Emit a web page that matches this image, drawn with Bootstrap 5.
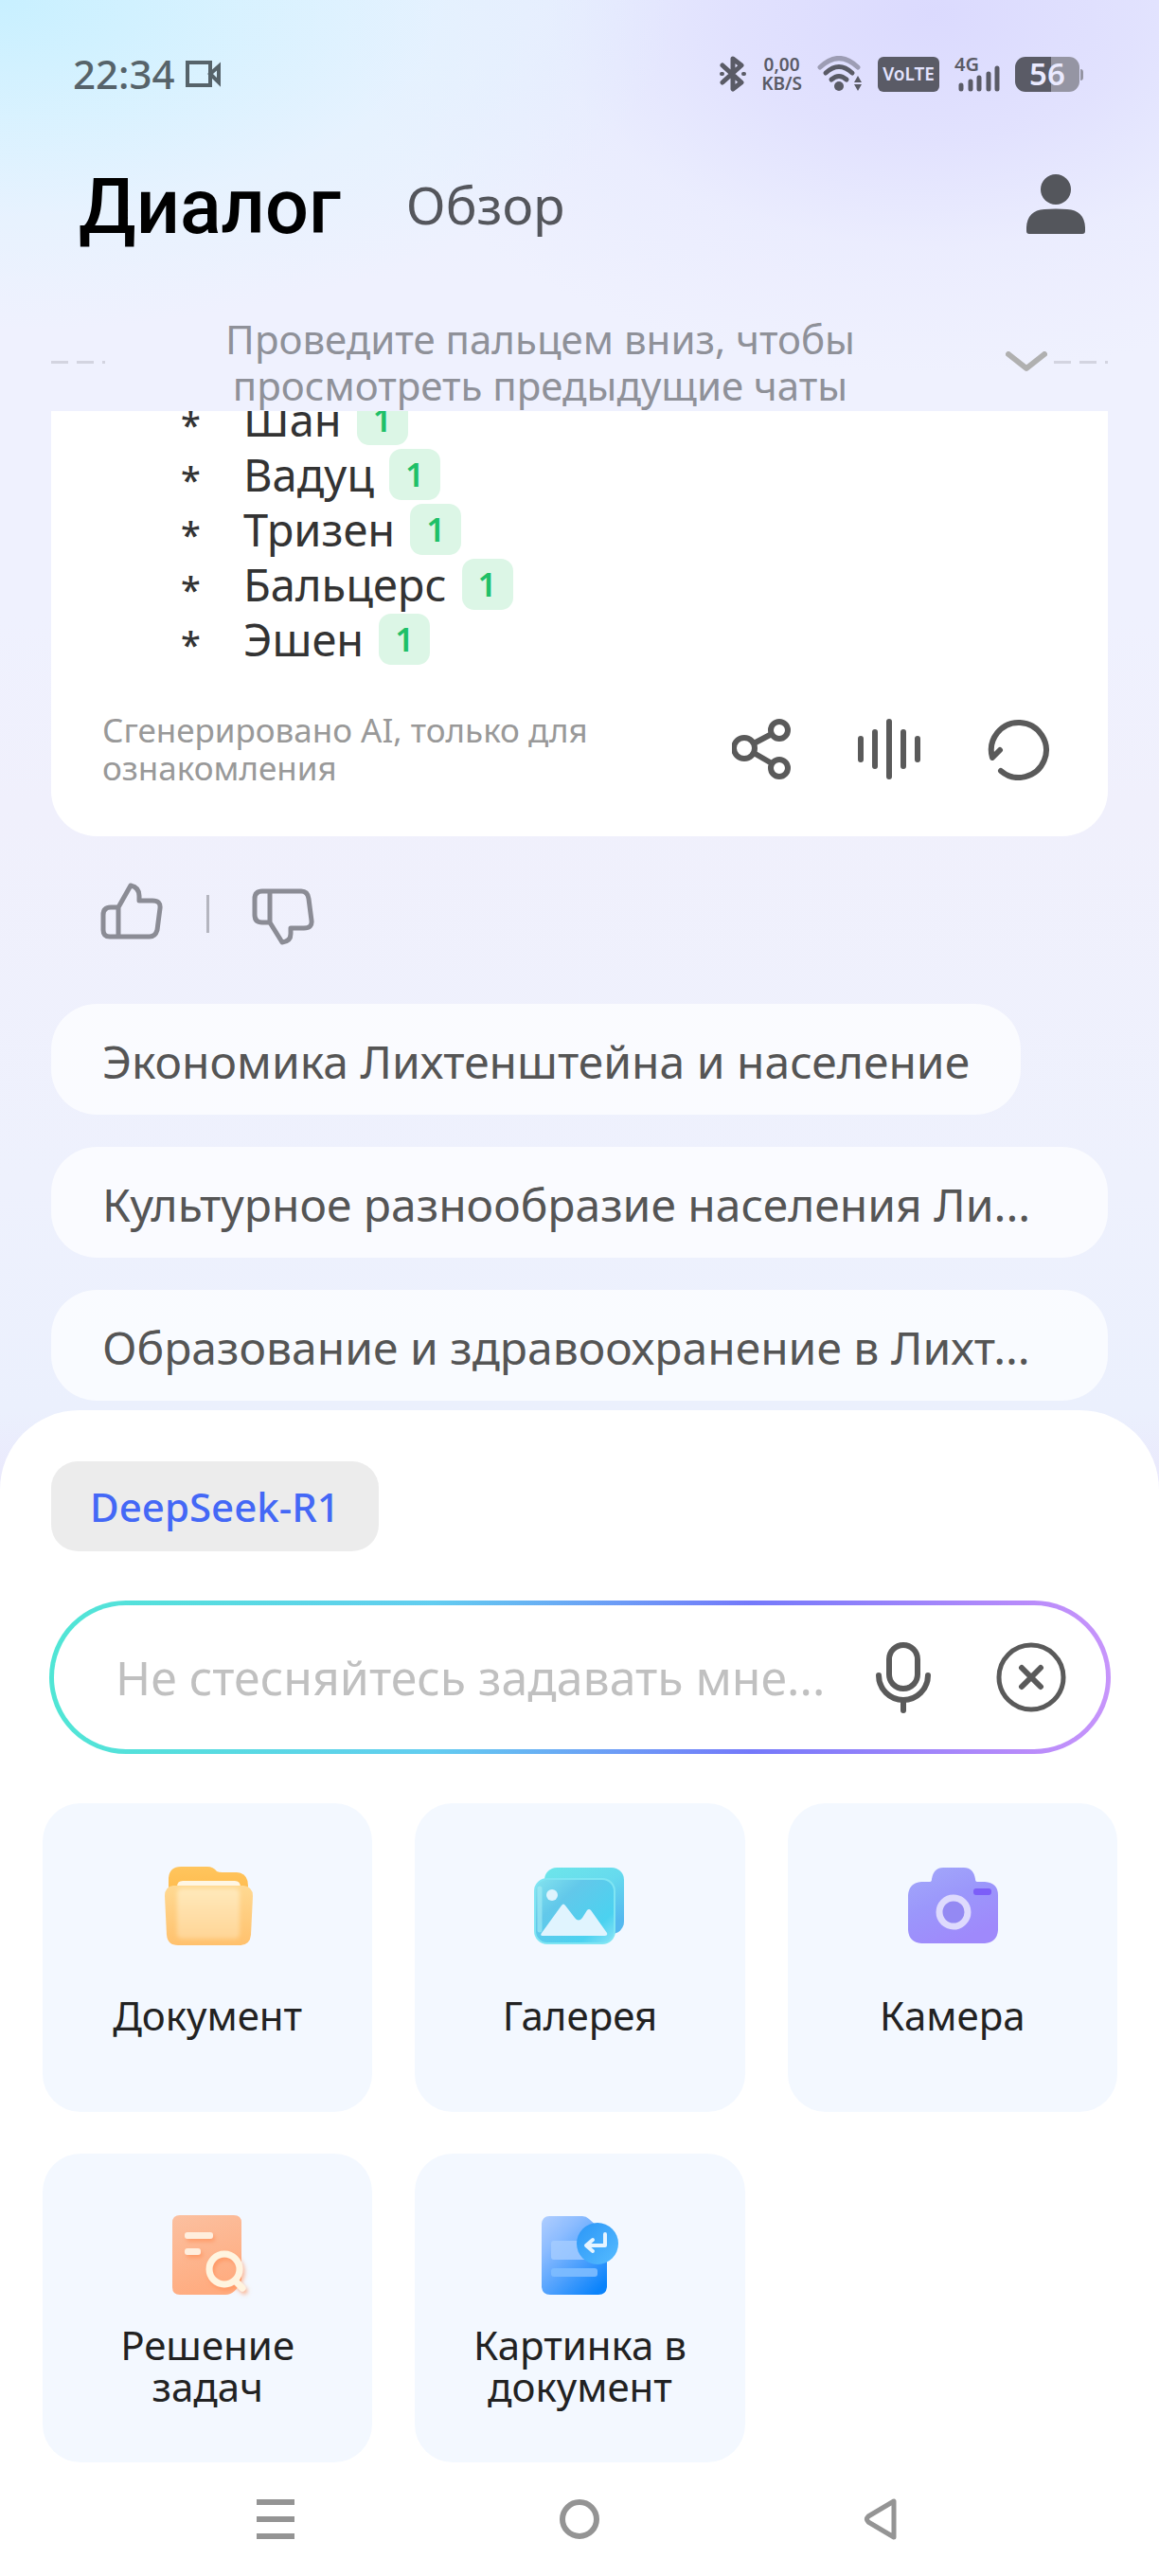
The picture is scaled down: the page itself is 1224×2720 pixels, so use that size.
<!DOCTYPE html>
<html lang="ru">
<head>
<meta charset="utf-8">
<meta name="viewport" content="width=device-width, initial-scale=1">
<title>Диалог</title>
<link rel="stylesheet" href="https://cdn.jsdelivr.net/npm/bootstrap@5.3.0/dist/css/bootstrap.min.css">
<style>
body{font-family:"Noto Sans","Open Sans",sans-serif;min-height:100vh;color:#333;
 background:radial-gradient(ellipse 720px 350px at 0 0,#c8f0ff 0,rgba(212,242,255,.8) 35%,rgba(225,243,255,.5) 65%,rgba(235,243,255,0) 100%),
 radial-gradient(ellipse 620px 380px at 985px 15px,#dbdafe 0,rgba(224,223,254,.85) 35%,rgba(232,232,254,.5) 65%,rgba(240,241,254,0) 100%),
 linear-gradient(#e8f1fe 0,#eff1fe 300px,#eff1fe 650px,#f0f0fc 850px,#eef1fd 1250px,#ebf0fd 1490px,#eae9fc 1560px);background-repeat:no-repeat}
svg{display:block;flex:none}
.btn{--bs-btn-border-width:0;--bs-btn-padding-x:0;--bs-btn-padding-y:0;--bs-btn-color:inherit;line-height:1}
.statusbar{height:156px;padding:0 84px 0 77px;color:#5a5b66}
.clock{font-size:42px;font-weight:500;line-height:60px;color:#56636a}
.speed{font-size:19px;line-height:20px;font-weight:600;text-align:center}
.volte{width:65px;height:37px;border-radius:6px;background:#5a5b66;color:#e3e3fe;font-size:19px;font-weight:600}
.net{width:48px;height:37px;position:relative}
.net b{position:absolute;left:0;top:-4px;font-size:20px;line-height:24px;font-weight:600}
.batt{width:68px;height:37px;border-radius:11px;background:linear-gradient(90deg,#5a5b66 56%,#9595a3 56%);color:#eaeaff;font-size:33px;font-weight:600;position:relative}
.batt::after{content:"";position:absolute;right:-4px;top:13px;width:3px;height:12px;border-radius:0 3px 3px 0;background:#9595a3}
.topnav{height:120px;margin-bottom:56px;padding:0 78px 0 83px}
.tab-on{font:500 81px/100px Roboto,sans-serif;color:#000;text-decoration:none;padding-top:6px}
.tab-off{font-size:55px;line-height:72px;color:#54565c;text-decoration:none;margin-left:69px}
.hint{height:102px;padding:0 54px 2px;color:#8f9199;font-size:42px;line-height:49px}
.dashes{flex:none;width:57px;height:3px;background:repeating-linear-gradient(90deg,#d3d4e0 0 18px,transparent 18px 27px)}
.chev{margin:0 7px 0 32px}
.answer{margin:0 54px;background:#fff;border-radius:0 0 48px 48px;overflow:hidden;padding:0 54px 52px}
.cities{margin:-20px 0 47px;padding:0 0 0 83px;list-style:none;font-size:47px;line-height:58px}
.cities .star{width:66px;font-size:38px;font-weight:500;line-height:48px;padding-top:10px}
.ref{width:54px;height:54px;border-radius:13px;background:#dcf6e6;color:#1fc068;font-size:35px;font-weight:600;margin-left:16px}
.note{font-size:35px;line-height:40px;color:#999;width:560px}
.tools{color:#5a5a5a;gap:71px;padding-right:7px}
.votes{height:177px;padding:0 106px 14px;color:#8b8c95}
.votes hr{width:3px;height:40px;margin:0 45px 0 46px;border:0;background:#b4b5bf;opacity:1}
.chips{padding:0 54px;gap:34px}
.chip{height:117px;border-radius:48px;background:rgba(255,255,255,.7);font-size:48px;line-height:66px;color:#555;padding:4px 54px 0;max-width:100%}
.chip:hover{background:#fff}
.sheet{background:#fff;border-radius:84px 84px 0 0;margin-top:10px;padding:54px 44px 0 45px}
.model{height:95px;margin-left:9px;padding:0 41px;border-radius:28px;background:#ececec;color:#4468f6;font-size:42px;font-weight:500}
.ask{height:162px;margin:52px 7px;padding:0 41px 0 65px;border:5px solid transparent;border-radius:81px;
 background:linear-gradient(#fff,#fff) padding-box,linear-gradient(90deg,#50e6d5,#62cdf0 36%,#7479fa 66%,#b88bfa 92%,#c795fb) border-box;color:#5a5a5a}
.ask input{border:0;outline:0;background:none;font-size:50px;min-width:0;padding:0;color:#333}
.ask input::placeholder{color:#c0c0c0;opacity:1}
.ask .closer{margin-left:69px}
.tiles{display:grid;grid-template-columns:repeat(3,1fr);gap:44px 45px}
.tile{height:326px;border-radius:40px;background:#f3f8ff;color:#222;font-size:42px;line-height:44px;padding-top:60px}
.tile:hover{background:#e9f2ff}
.legend2{height:112px;margin-top:12px}
.sysnav{height:120px;padding:0 232px 0 226px;color:#949494}
</style>
</head>
<body>
<header>
 <div class="statusbar d-flex align-items-center justify-content-between">
  <div class="d-flex align-items-center gap-2">
   <span class="clock">22:34</span>
   <svg width="42" height="30" viewBox="0 0 42 30" fill="none" stroke="#56636a" stroke-width="4"><path d="M5 3h24v24H5zM29 15l9-8v17z"/></svg>
  </div>
  <div class="d-flex align-items-center gap-3">
   <svg width="28" height="38" viewBox="0 0 28 38" fill="none" stroke="currentColor" stroke-width="5" stroke-linejoin="round" stroke-linecap="round"><path d="M3 10l20 18-9 7V3l9 7L3 28"/><path d="M2 19h1M25 19h1" stroke-width="4"/></svg>
   <span class="speed">0,00<br>KB/S</span>
   <svg width="48" height="38" viewBox="0 0 48 38" fill="none" stroke="currentColor" stroke-width="5" stroke-linecap="round"><path d="M3 12Q23-7 43 12" stroke="#9d9db4"/><path d="M9 18Q23 5 37 18M15 25Q23 18 31 25"/><circle cx="23" cy="32" r="5" fill="currentColor" stroke="none"/><path d="M43 21l4 7h-8zM43 37l4-7h-8z" fill="currentColor" stroke="none"/></svg>
   <span class="volte d-flex align-items-center justify-content-center">VoLTE</span>
   <span class="net"><b>4G</b><svg width="48" height="37" viewBox="0 0 48 37" stroke="currentColor" stroke-width="5" stroke-linecap="round"><path d="M7 30v4M17 26v8M26 22v12M36 18v16M45 12v22"/></svg></span>
   <span class="batt d-flex align-items-center justify-content-center">56</span>
  </div>
 </div>
 <nav class="topnav d-flex align-items-center">
  <a class="tab-on" href="#dialog">Диалог</a>
  <a class="tab-off" href="#review">Обзор</a>
  <button class="btn ms-auto" aria-label="Профиль"><svg width="62" height="64" viewBox="0 0 62 64" fill="#54565c"><circle cx="31" cy="16" r="16"/><path d="M0 60V56Q1 38 19 37Q31 36 43 37Q61 38 62 56V60Q62 63 59 63H3Q0 63 0 60z"/></svg></button>
 </nav>
 <div class="hint d-flex align-items-center">
  <span class="dashes"></span>
  <p class="flex-grow-1 text-center mb-0">Проведите пальцем вниз, чтобы<br>просмотреть предыдущие чаты</p>
  <svg class="chev" width="44" height="22" viewBox="0 0 44 22" fill="none" stroke="#b0b0b0" stroke-width="6" stroke-linecap="round" stroke-linejoin="round"><path d="M3 3l19 15L41 3"/></svg>
  <span class="dashes"></span>
 </div>
</header>
<main>
 <section class="answer">
  <ul class="cities">
   <li class="d-flex align-items-center"><span class="star">*</span>Шан<span class="ref d-flex align-items-center justify-content-center">1</span></li>
   <li class="d-flex align-items-center"><span class="star">*</span>Вадуц<span class="ref d-flex align-items-center justify-content-center">1</span></li>
   <li class="d-flex align-items-center"><span class="star">*</span>Тризен<span class="ref d-flex align-items-center justify-content-center">1</span></li>
   <li class="d-flex align-items-center"><span class="star">*</span>Бальцерс<span class="ref d-flex align-items-center justify-content-center">1</span></li>
   <li class="d-flex align-items-center"><span class="star">*</span>Эшен<span class="ref d-flex align-items-center justify-content-center">1</span></li>
  </ul>
  <div class="d-flex align-items-center justify-content-between">
   <p class="note mb-0">Сгенерировано AI, только для ознакомления</p>
   <div class="tools d-flex align-items-center">
    <button class="btn" aria-label="Поделиться"><svg width="62" height="64" viewBox="0 0 62 64" fill="none" stroke="currentColor" stroke-width="6"><circle cx="13" cy="31" r="11"/><circle cx="50" cy="12" r="9"/><circle cx="50" cy="52" r="9"/><path d="M23 26l19-10M23 36l19 11"/></svg></button>
    <button class="btn" aria-label="Озвучить"><svg width="66" height="64" viewBox="0 0 66 64" stroke="currentColor" stroke-width="6" stroke-linecap="round"><path d="M3 21v22M18 14v36M33 3v58M48 14v36M63 21v22"/></svg></button>
    <button class="btn" aria-label="Обновить"><svg width="66" height="66" viewBox="0 0 66 66" fill="none" stroke="currentColor" stroke-width="6" stroke-linecap="round" stroke-linejoin="round"><path d="M14 56A29 29 0 1 0 5 42l8-8"/></svg></button>
   </div>
  </div>
 </section>
 <div class="votes d-flex align-items-center">
  <button class="btn" aria-label="Нравится"><svg width="66" height="66" viewBox="0 0 66 66" fill="none" stroke="currentColor" stroke-width="5" stroke-linejoin="round"><path d="M19 26H11Q3 26 3 34V50Q3 57 10 57H52Q58 57 60 50L63 27Q64 19 55 19H41V14Q41 5 32 3L19 26V57"/></svg></button>
  <hr>
  <button class="btn" aria-label="Не нравится"><svg width="66" height="66" viewBox="0 0 66 66" fill="none" stroke="currentColor" stroke-width="5" stroke-linejoin="round"><path d="M19 42H11Q3 42 3 34V17Q3 9 11 9H52Q59 9 60 17L63 40Q64 48 55 48H41V54Q41 62 32 63L19 42V9"/></svg></button>
 </div>
 <div class="chips d-flex flex-column align-items-start">
  <button class="btn chip text-nowrap">Экономика Лихтенштейна и население</button>
  <button class="btn chip text-nowrap w-100 text-start">Культурное разнообразие населения Ли...</button>
  <button class="btn chip text-nowrap w-100 text-start">Образование и здравоохранение в Лихт...</button>
 </div>
</main>
<section class="sheet">
 <button class="btn model">DeepSeek-R1</button>
 <div class="ask d-flex align-items-center">
  <input type="text" class="flex-grow-1" aria-label="Вопрос" placeholder="Не стесняйтесь задавать мне...">
  <button class="btn" aria-label="Голосовой ввод"><svg width="58" height="75" viewBox="0 0 58 75" fill="none" stroke="currentColor" stroke-width="6" stroke-linecap="round"><rect x="14" y="3" width="30" height="46" rx="15"/><path d="M3 35a26 26 0 0 0 52 0M29 62v10"/></svg></button>
  <button class="btn closer" aria-label="Закрыть"><svg width="75" height="75" viewBox="0 0 75 75" fill="none" stroke="currentColor" stroke-width="5" stroke-linecap="round"><circle cx="37" cy="37" r="34"/><path d="M27 27l20 20M47 27L27 47" stroke-width="6"/></svg></button>
 </div>
 <div class="tiles">
  <button class="btn tile d-flex flex-column align-items-center">
   <svg width="100" height="96" viewBox="0 0 100 96"><defs><linearGradient id="fa" x2="0" y2="1"><stop stop-color="#ffc55d"/><stop offset="1" stop-color="#ffb646"/></linearGradient><linearGradient id="fb" x2="0" y2="1"><stop stop-color="#ffd992"/><stop offset="1" stop-color="#ffc16d"/></linearGradient><linearGradient id="fc" x2="0" y2="1"><stop stop-color="#ffe9bb"/><stop offset="1" stop-color="#ffd596"/></linearGradient><filter id="fd"><feGaussianBlur stdDeviation="2"/></filter></defs><path d="M9 50V19Q10 7 22 7H50Q56 7 60 12Q62 13 66 13H81Q93 14 93 27V50z" fill="url(#fa)"/><path d="M18 40V28Q18 22 24 22H79Q85 22 85 29V40z" fill="#fff6e4"/><path d="M14 27H88Q98 28 98 38L96 79Q95 90 84 90H19Q8 90 7 79L5 38Q5 28 14 27z" fill="url(#fb)"/><rect x="18" y="30" width="66" height="53" rx="5" fill="url(#fc)" filter="url(#fd)"/></svg>
   <span class="legend2 d-flex align-items-center">Документ</span>
  </button>
  <button class="btn tile d-flex flex-column align-items-center">
   <svg width="100" height="96" viewBox="0 0 100 96"><defs><linearGradient id="ga" x2=".6" y2="1"><stop stop-color="#6de6ea"/><stop offset=".5" stop-color="#66daee"/><stop offset="1" stop-color="#55b9ef"/></linearGradient><linearGradient id="gb" x2="1" y2=".9"><stop stop-color="#84e3ee"/><stop offset=".35" stop-color="#62c8ea"/><stop offset=".8" stop-color="#4bd2f0"/><stop offset="1" stop-color="#7edff5"/></linearGradient></defs><rect x="13" y="8" width="84" height="70" rx="13" fill="url(#ga)"/><rect x="3" y="20" width="84" height="68" rx="13" fill="url(#gb)" stroke="#7fe5f3" stroke-width="2"/><path d="M8 30V74" stroke="#a8eef6" stroke-width="5" opacity=".6" stroke-linecap="round"/><circle cx="21" cy="37" r="6" fill="#def3fd"/><path d="M11 80Q8 80 10 77L31 48Q33 45 35 48L45 61Q49 66 53 61L58 53Q60 51 62 53L79 77Q80 80 77 80z" fill="#e0f4fe"/></svg>
   <span class="legend2 d-flex align-items-center">Галерея</span>
  </button>
  <button class="btn tile d-flex flex-column align-items-center">
   <svg width="100" height="96" viewBox="0 0 100 96"><defs><linearGradient id="ca" x2=".5" y2="1"><stop stop-color="#a3a9fa"/><stop offset=".5" stop-color="#9b97fb"/><stop offset="1" stop-color="#9f89fb"/></linearGradient></defs><path d="M17 23H26Q28 23 28 20Q30 8 40 8H62Q72 8 74 20Q74 23 76 23H84Q98 24 98 37V74Q97 87 84 88H17Q4 87 3 74V37Q4 24 17 23z" fill="url(#ca)"/><circle cx="51" cy="55" r="15" fill="#9489f3" stroke="#dedafd" stroke-width="7"/><rect x="72" y="30" width="19" height="7" rx="3" fill="#7c5ef8"/></svg>
   <span class="legend2 d-flex align-items-center">Камера</span>
  </button>
  <button class="btn tile d-flex flex-column align-items-center">
   <svg width="100" height="96" viewBox="0 0 100 96"><defs><linearGradient id="pa" x2=".3" y2="1"><stop stop-color="#fbc0a0"/><stop offset="1" stop-color="#ffac80"/></linearGradient><filter id="pb" x="-30%" y="-30%" width="170%" height="170%"><feDropShadow dx="2" dy="3" stdDeviation="2" flood-color="#ff8a50" flood-opacity=".6"/></filter></defs><path d="M21 5H78Q86 5 86 13V73Q80 89 69 89H21Q13 89 13 81V13Q13 5 21 5z" fill="url(#pa)"/><g filter="url(#pb)"><rect x="26" y="23" width="30" height="7" rx="3" fill="#ffeedd"/><rect x="26" y="40" width="17" height="7" rx="3" fill="#ffeedd"/><circle cx="68" cy="62" r="16" fill="none" stroke="#fff4df" stroke-width="7"/><path d="M80 75l7 7" stroke="#fff4df" stroke-width="7" stroke-linecap="round"/></g></svg>
   <span class="legend2 d-flex align-items-center">Решение<br>задач</span>
  </button>
  <button class="btn tile d-flex flex-column align-items-center">
   <svg width="100" height="96" viewBox="0 0 100 96"><defs><linearGradient id="ia" x2=".8" y2="1"><stop stop-color="#b0ceff"/><stop offset=".3" stop-color="#8cbcff"/><stop offset=".65" stop-color="#4da0fd"/><stop offset="1" stop-color="#0a83fb"/></linearGradient><linearGradient id="ib" x2="1" y2="1"><stop stop-color="#2b96f7"/><stop offset="1" stop-color="#56bcff"/></linearGradient></defs><path d="M18 6H53Q57 6 60 9L79 26V81Q78 89 70 89H19Q11 89 10 81V14Q11 6 18 6z" fill="url(#ia)"/><rect x="20" y="32" width="38" height="20" rx="3" fill="#a6cdff" opacity=".8"/><rect x="20" y="61" width="49" height="9" rx="3" fill="#7ebcff" opacity=".9"/><circle cx="69" cy="35" r="22" fill="url(#ib)"/><path d="M77 25v12H58M64 31l-7 6 7 6" fill="none" stroke="#e6f4ff" stroke-width="4" stroke-linecap="round" stroke-linejoin="round"/></svg>
   <span class="legend2 d-flex align-items-center">Картинка в<br>документ</span>
  </button>
 </div>
 <nav class="sysnav d-flex align-items-center justify-content-between" aria-label="Система">
  <button class="btn" aria-label="Меню"><svg width="40" height="42" viewBox="0 0 40 42" stroke="currentColor" stroke-width="6"><path d="M0 3h40M0 21h40M0 39h40"/></svg></button>
  <button class="btn" aria-label="Домой"><svg width="42" height="42" viewBox="0 0 42 42" fill="none" stroke="currentColor" stroke-width="6"><circle cx="21" cy="21" r="18"/></svg></button>
  <button class="btn" aria-label="Назад"><svg width="36" height="46" viewBox="0 0 36 46" fill="none" stroke="currentColor" stroke-width="5" stroke-linejoin="round"><path d="M32 4V42L5 26Q2 23 5 20z"/></svg></button>
 </nav>
</section>
<script src="https://cdn.jsdelivr.net/npm/bootstrap@5.3.0/dist/js/bootstrap.bundle.min.js"></script>
</body>
</html>
